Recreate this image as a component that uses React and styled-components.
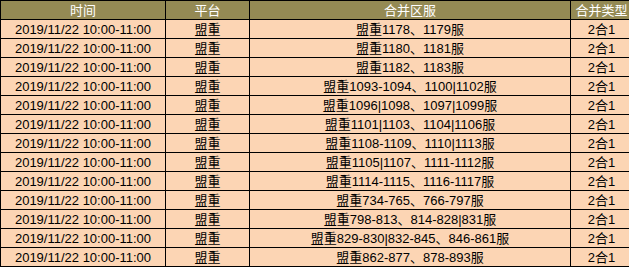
import React from "react";
import styled, { createGlobalStyle } from "styled-components";

const GlobalStyle = createGlobalStyle`
  html, body {
    margin: 0;
    padding: 0;
    background: #ffffff;
  }
`;

const Wrapper = styled.div`
  width: 629px;
  height: 269px;
  overflow: hidden;
`;

const Grid = styled.div`
  display: grid;
  grid-template-columns: 164px 83px 320px 61px;
  grid-auto-rows: 18px;
  gap: 1px;
  padding: 1px;
  background: #000000;
  width: max-content;
`;

const HeadCell = styled.div`
  background: #948a54;
  color: #ffffff;
  font-family: "Noto Sans CJK SC", "Liberation Sans", sans-serif;
  font-size: 13px;
  line-height: 18px;
  text-align: center;
  white-space: nowrap;
`;

const Cell = styled.div`
  background: #fcd5b4;
  color: #000000;
  font-family: "Liberation Sans", "Noto Sans CJK SC", sans-serif;
  font-size: 13px;
  line-height: 18px;
  padding-top: 1px;
  box-sizing: border-box;
  text-align: center;
  white-space: nowrap;
`;

const headers = ["时间", "平台", "合并区服", "合并类型"];

const servers = [
  "盟重1178、1179服",
  "盟重1180、1181服",
  "盟重1182、1183服",
  "盟重1093-1094、1100|1102服",
  "盟重1096|1098、1097|1099服",
  "盟重1101|1103、1104|1106服",
  "盟重1108-1109、1110|1113服",
  "盟重1105|1107、1111-1112服",
  "盟重1114-1115、1116-1117服",
  "盟重734-765、766-797服",
  "盟重798-813、814-828|831服",
  "盟重829-830|832-845、846-861服",
  "盟重862-877、878-893服",
];

const App = () => {
  return (
    <Wrapper>
      <GlobalStyle />
      <Grid>
        {headers.map((h) => (
          <HeadCell key={h}>{h}</HeadCell>
        ))}
        {servers.map((s) => (
          <React.Fragment key={s}>
            <Cell>2019/11/22 10:00-11:00</Cell>
            <Cell>盟重</Cell>
            <Cell>{s}</Cell>
            <Cell>2合1</Cell>
          </React.Fragment>
        ))}
      </Grid>
    </Wrapper>
  );
};

export default App;
